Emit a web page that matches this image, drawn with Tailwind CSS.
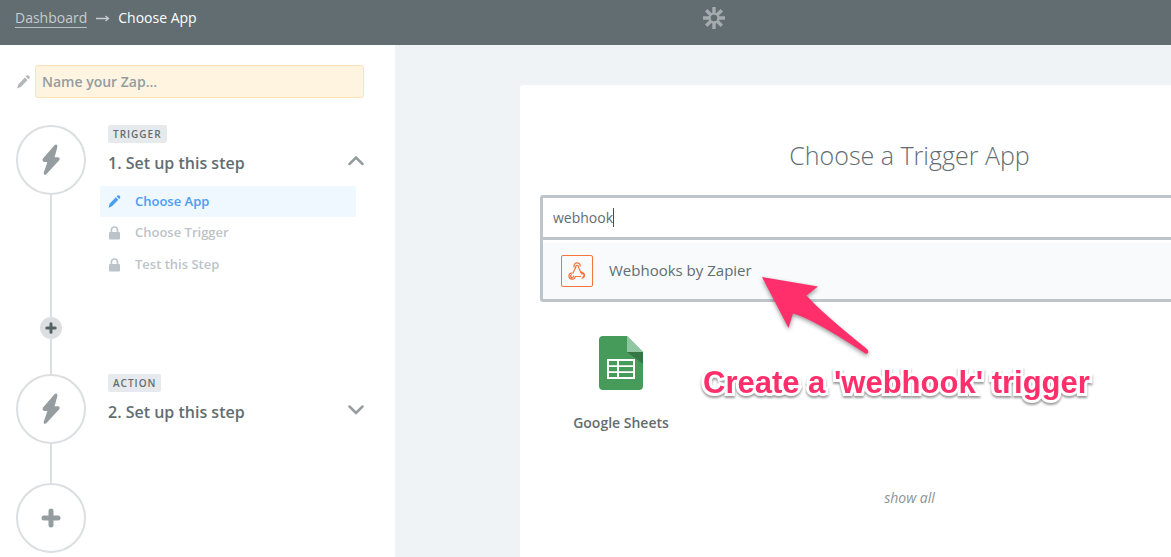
<!DOCTYPE html>
<html lang="en">
<head>
<meta charset="utf-8">
<title>Choose App</title>
<script src="https://cdn.jsdelivr.net/npm/@tailwindcss/browser@4"></script>
</head>
<body class="overflow-hidden bg-[#eff3f5] font-['Open_Sans',sans-serif] text-[#626d71]">
<svg class="hidden" aria-hidden="true">
  <symbol id="bolt" viewBox="0 0 18 32"><path d="M12.500 1.200 1 14.600Q-.4 17.500 2.500 18H5.400L1.700 28.800Q1.500 32 4.300 30.200L17.200 16.300Q18.600 13.700 16 13.200H12.600L15.400 3Q15.500-.6 12.500 1.200Z" fill="currentColor"/></symbol>
  <symbol id="pencil" viewBox="0 0 14 14"><path d="M8.400 2.400 11.100 5.100 4.200 12 .6 13.600 1.700 9.500ZM9.200 1.500 10.200.6Q11.400-.2 12.500.8T13 3.200L12 4.200Z" fill="currentColor"/></symbol>
  <symbol id="lock" viewBox="0 0 12 14"><rect x="0.500" y="6" width="11" height="7.500" rx="1" fill="currentColor"/><path d="M3 6.500V4Q3 1 6 1T9 4V6.500" fill="none" stroke="currentColor" stroke-width="1.700"/></symbol>
  <symbol id="plus" viewBox="0 0 20 20"><path d="M10 3V17M3 10H17" stroke="currentColor" stroke-width="5" stroke-linecap="round"/></symbol>
</svg>
<div class="min-h-screen min-w-[1428px]">
  <header class="grid h-[45px] grid-cols-[1fr_auto_1fr] bg-[#626d71] px-[15px] text-sm">
    <nav class="flex h-9 items-center gap-2" aria-label="Breadcrumb">
      <a href="#" class="border-b border-[#b8bfc2] leading-[18px] text-[#c6cccf]">Dashboard</a>
      <svg class="h-2 w-[15px] text-[#c6cccf]" viewBox="0 0 15 8" fill="none" stroke="currentColor" stroke-width="1.300"><path d="M1 4.500H13M10.500 2 13.500 4.500 10.500 7"/></svg>
      <span class="leading-[18px] font-medium text-white">Choose App</span>
    </nav>
    <a href="#" aria-label="Home" class="flex h-9 items-center text-[#a5abae]">
      <svg class="size-[22px]" viewBox="0 0 22 22" fill="none" stroke="currentColor" stroke-width="3.400"><path d="M11 0V7.500M11 14.500V22M0 11H7.500M14.500 11H22M3.200 3.200 8.500 8.500M13.500 13.500 18.800 18.800M18.800 3.200 13.500 8.500M8.500 13.500 3.200 18.800"/><circle cx="11" cy="11" r="4.500" stroke-width="2"/></svg>
    </a>
  </header>
  <div class="flex">
    <aside class="min-h-[512px] w-[395px] shrink-0 bg-white pt-5 pr-[31px] pl-4">
      <label class="flex items-center gap-1">
        <svg class="h-[14px] w-[15px] text-[#b0b6b9]"><use href="#pencil"/></svg>
        <input type="text" aria-label="Zap name" placeholder="Name your Zap..." class="h-[33px] min-w-0 flex-1 rounded-[3px] border border-[#fde3b8] bg-[#fff4e0] px-[6px] text-sm font-semibold outline-none placeholder:text-[#949c9f]">
      </label>
      <ol class="pt-[27px]">
        <li class="flex gap-[14px]">
          <div class="flex w-[70px] shrink-0 flex-col items-center">
            <div class="flex size-[70px] items-center justify-center rounded-full border-2 border-[#dbdfe2] text-[#959da0]"><svg class="h-8 w-[18px]"><use href="#bolt"/></svg></div>
            <div class="h-[122px] w-[2px] bg-[#dbdfe2]"></div>
            <button type="button" aria-label="Add a step" class="flex size-[22px] items-center justify-center rounded-full bg-[#dbdfe2] text-[#566266]"><svg class="size-3"><use href="#plus"/></svg></button>
            <div class="h-[35px] w-[2px] bg-[#dbdfe2]"></div>
          </div>
          <div class="flex-1">
            <div class="flex px-2"><span class="rounded-[2px] bg-[#e6eaed] px-[5px] text-[10px] leading-[18px] font-semibold tracking-[1px]">TRIGGER</span></div>
            <button type="button" aria-expanded="true" class="mb-1 flex h-[39px] w-full items-center justify-between pl-2 text-base font-semibold">1. Set up this step
              <svg class="mb-1 h-3 w-4 text-[#959da0]" viewBox="0 0 16 12" fill="none" stroke="currentColor" stroke-width="2.500" stroke-linecap="round"><path d="M1.500 9 8 2.500 14.500 9"/></svg></button>
            <ul class="mr-2 text-[13px] font-semibold">
              <li><a href="#" class="flex h-[31px] items-center gap-[14px] rounded-[2px] bg-[#eff7ff] pl-2 text-[#499df3]"><svg class="size-[13px]"><use href="#pencil"/></svg>Choose App</a></li>
              <li class="flex h-8 items-center gap-[14px] pl-2 text-[#bdc4c9]"><svg class="h-[14px] w-[13px]"><use href="#lock"/></svg>Choose Trigger</li>
              <li class="flex h-8 items-center gap-[14px] pl-2 text-[#bdc4c9]"><svg class="h-[14px] w-[13px]"><use href="#lock"/></svg>Test this Step</li>
            </ul>
          </div>
        </li>
        <li class="flex gap-[14px]">
          <div class="flex w-[70px] shrink-0 flex-col items-center">
            <div class="flex size-[70px] items-center justify-center rounded-full border-2 border-[#dbdfe2] text-[#959da0]"><svg class="h-8 w-[18px]"><use href="#bolt"/></svg></div>
            <div class="h-[39px] w-[2px] bg-[#dbdfe2]"></div>
          </div>
          <div class="flex-1">
            <div class="flex px-2"><span class="rounded-[2px] bg-[#e6eaed] px-[5px] text-[10px] leading-[18px] font-semibold tracking-[1px]">ACTION</span></div>
            <button type="button" aria-expanded="false" class="flex h-[39px] w-full items-center justify-between pl-2 text-base font-semibold">2. Set up this step
              <svg class="mb-1 h-3 w-4 text-[#959da0]" viewBox="0 0 16 12" fill="none" stroke="currentColor" stroke-width="2.500" stroke-linecap="round"><path d="M1.500 2.500 8 9 14.500 2.500"/></svg></button>
          </div>
        </li>
        <li><button type="button" aria-label="Add another step" class="flex size-[70px] items-center justify-center rounded-full border-2 border-[#dbdfe2] text-[#959da0]"><svg class="size-5"><use href="#plus"/></svg></button></li>
      </ol>
    </aside>
    <main class="flex flex-1 pt-10 pr-[129px] pl-[125px]">
      <section class="relative flex-1 rounded-t-[3px] bg-white px-5 pt-[50px]">
        <h1 class="text-center text-[25px] leading-10 font-light">Choose a Trigger App</h1>
        <div class="mt-5 rounded-[3px] border-3 border-[#bdc5ca]">
          <label class="flex h-[39px] items-center pl-[10px] text-sm">
            <input type="text" aria-label="Search apps" value="webhook" class="field-sizing-content outline-none">
            <span class="h-[19px] w-px bg-[#444f55]"></span>
          </label>
          <div class="border-t-3 border-[#bdc5ca] pt-[3px]">
            <button type="button" class="flex h-14 w-full items-center gap-4 bg-[#f8fafc] pb-px pl-[18px] text-[15px]">
              <span class="flex size-8 items-center justify-center rounded-[2px] border border-[#f4743b]">
                <svg class="size-5" viewBox="0 0 20 20" fill="none" stroke="#f4743b" stroke-width="1.200"><path d="M7.300 6.500A3.200 3.200 0 1 1 13.300 5.500M9 7A1.500 1.500 0 1 1 11.500 6.300L14.300 12.200M8.700 6.600 5.600 12.800M4.800 11.800A3.200 3.200 0 1 0 8.300 15.500H14M4.800 13.600A1.500 1.500 0 1 0 6.500 14.600M13 11.400A3.200 3.200 0 1 1 14.500 17.500M14.300 13.400A1.500 1.500 0 1 1 15.500 15.700"/></svg>
              </span>
              Webhooks by Zapier
            </button>
          </div>
        </div>
        <a href="#" class="mt-[34px] flex w-[162px] flex-col items-center text-sm font-semibold">
          <svg class="h-[54px] w-11" viewBox="0 0 44 54"><path d="M4 0H28L44 16V50Q44 54 40 54H4Q0 54 0 50V4Q0 0 4 0Z" fill="#479b5a"/><path d="M28 0 44 16H28Z" fill="#8fc7a2"/><path d="M28 16H44V28Z" fill="#367546"/><path d="M8 23H36V43H8ZM10 25V29.300H18V25ZM20 25V29.300H34V25ZM10 31V35.300H18V31ZM20 31V35.300H34V31ZM10 37V41H18V37ZM20 37V41H34V37Z" fill="#fff" fill-rule="evenodd"/></svg>
          <span class="mt-[23px] leading-5">Google Sheets</span>
        </a>
        <a href="#" class="mt-[55px] mb-[49px] block text-center text-sm leading-5 text-[#8b9497] italic">show all</a>
        <div class="pointer-events-none absolute top-[190px] left-[183px]">
          <svg class="ml-[59px] h-[84px] w-[112px] overflow-visible drop-shadow-[0_2px_2px_rgba(0,0,0,0.4)]" viewBox="0 0 112 84"><path d="M0 2 56 11.500 44.500 20.500Q60 38 105 74Q108 78 104 79Q65 53 43 43 36 39.500 31 38.500L26.500 53Z" fill="#ff2f6c"/></svg>
          <p class="mt-1 text-[31px] leading-10 font-bold whitespace-nowrap text-[#ff2f6c] drop-shadow-[0_2px_1px_rgba(0,0,0,0.4)] [-webkit-text-stroke:6px_white] [paint-order:stroke_fill] [font-family:'Liberation_Sans',sans-serif]">Create a 'webhook' trigger</p>
        </div>
      </section>
    </main>
  </div>
</div>
</body>
</html>
